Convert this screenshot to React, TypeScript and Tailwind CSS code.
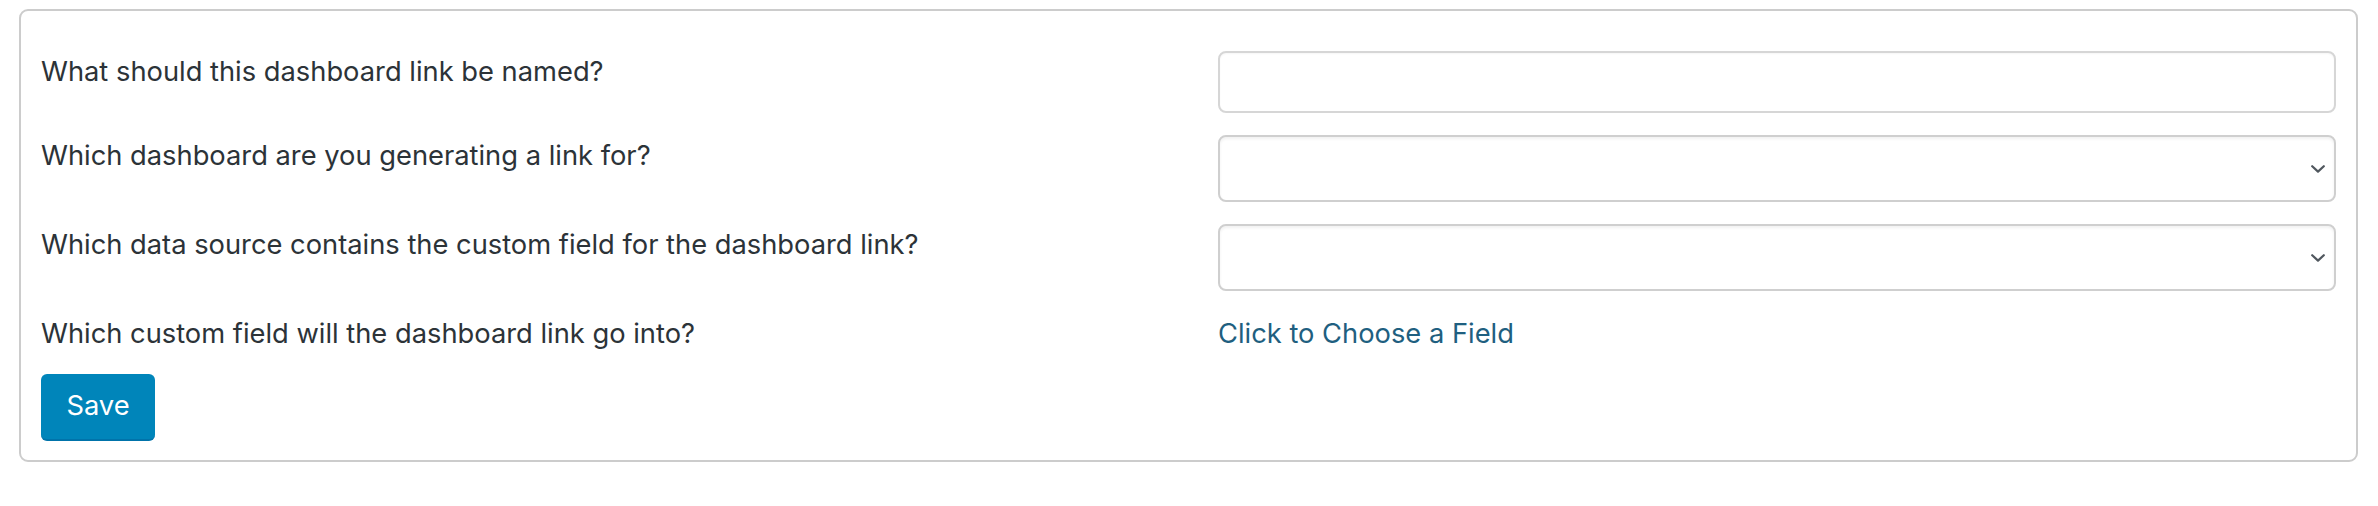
import React from "react";

function Chevron() {
  return (
    <svg
      width="14"
      height="8"
      viewBox="0 0 14 8"
      className="pointer-events-none absolute right-[9px] top-1/2 -translate-y-1/2"
    >
      <path d="M1.2 1.2 L7 6.6 L12.8 1.2" fill="none" stroke="#50575e" strokeWidth="2.2" strokeLinecap="round" strokeLinejoin="round" />
    </svg>
  );
}

function SelectBox() {
  return (
    <div className="relative h-[67px] w-full rounded-[8px] border-2 border-[#cfcfcf] bg-white shadow-[inset_0_2px_3px_rgba(0,0,0,0.06)]">
      <Chevron />
    </div>
  );
}

export default function App() {
  const label = "h-[40px] leading-[40px] pt-[1px] text-[27.3px] text-[#2c3338]";
  return (
    <div className="min-h-[506px] bg-white pl-[19px] pr-[20px] pt-[9px]" style={{ fontFamily: "Inter, 'Noto Sans', sans-serif" }}>
      <div className="rounded-[9px] border-2 border-[#cccccc] bg-white px-[20px] pt-[40px] pb-[19px]">
        <div className="grid grid-cols-[1177px_1fr] gap-y-[22px]">
          <div className={label}>What should this dashboard link be named?</div>
          <div className="h-[62px] rounded-[8px] border-2 border-[#d6d6d6] bg-white shadow-[inset_0_1px_2px_rgba(0,0,0,0.04)]" />

          <div className={label}>Which dashboard are you generating a link for?</div>
          <SelectBox />

          <div className={label}>Which data source contains the custom field for the dashboard link?</div>
          <SelectBox />

          <div className={label}>Which custom field will the dashboard link go into?</div>
          <div className={label}>
            <a className="text-[#1f5f80] no-underline" href="#">
              Click to Choose a Field
            </a>
          </div>
        </div>
        <button className="mt-[21px] h-[67px] w-[114px] rounded-[6px] border-b-2 border-[#0073aa] bg-[#0085ba] text-[27.3px] text-white">
          Save
        </button>
      </div>
    </div>
  );
}
